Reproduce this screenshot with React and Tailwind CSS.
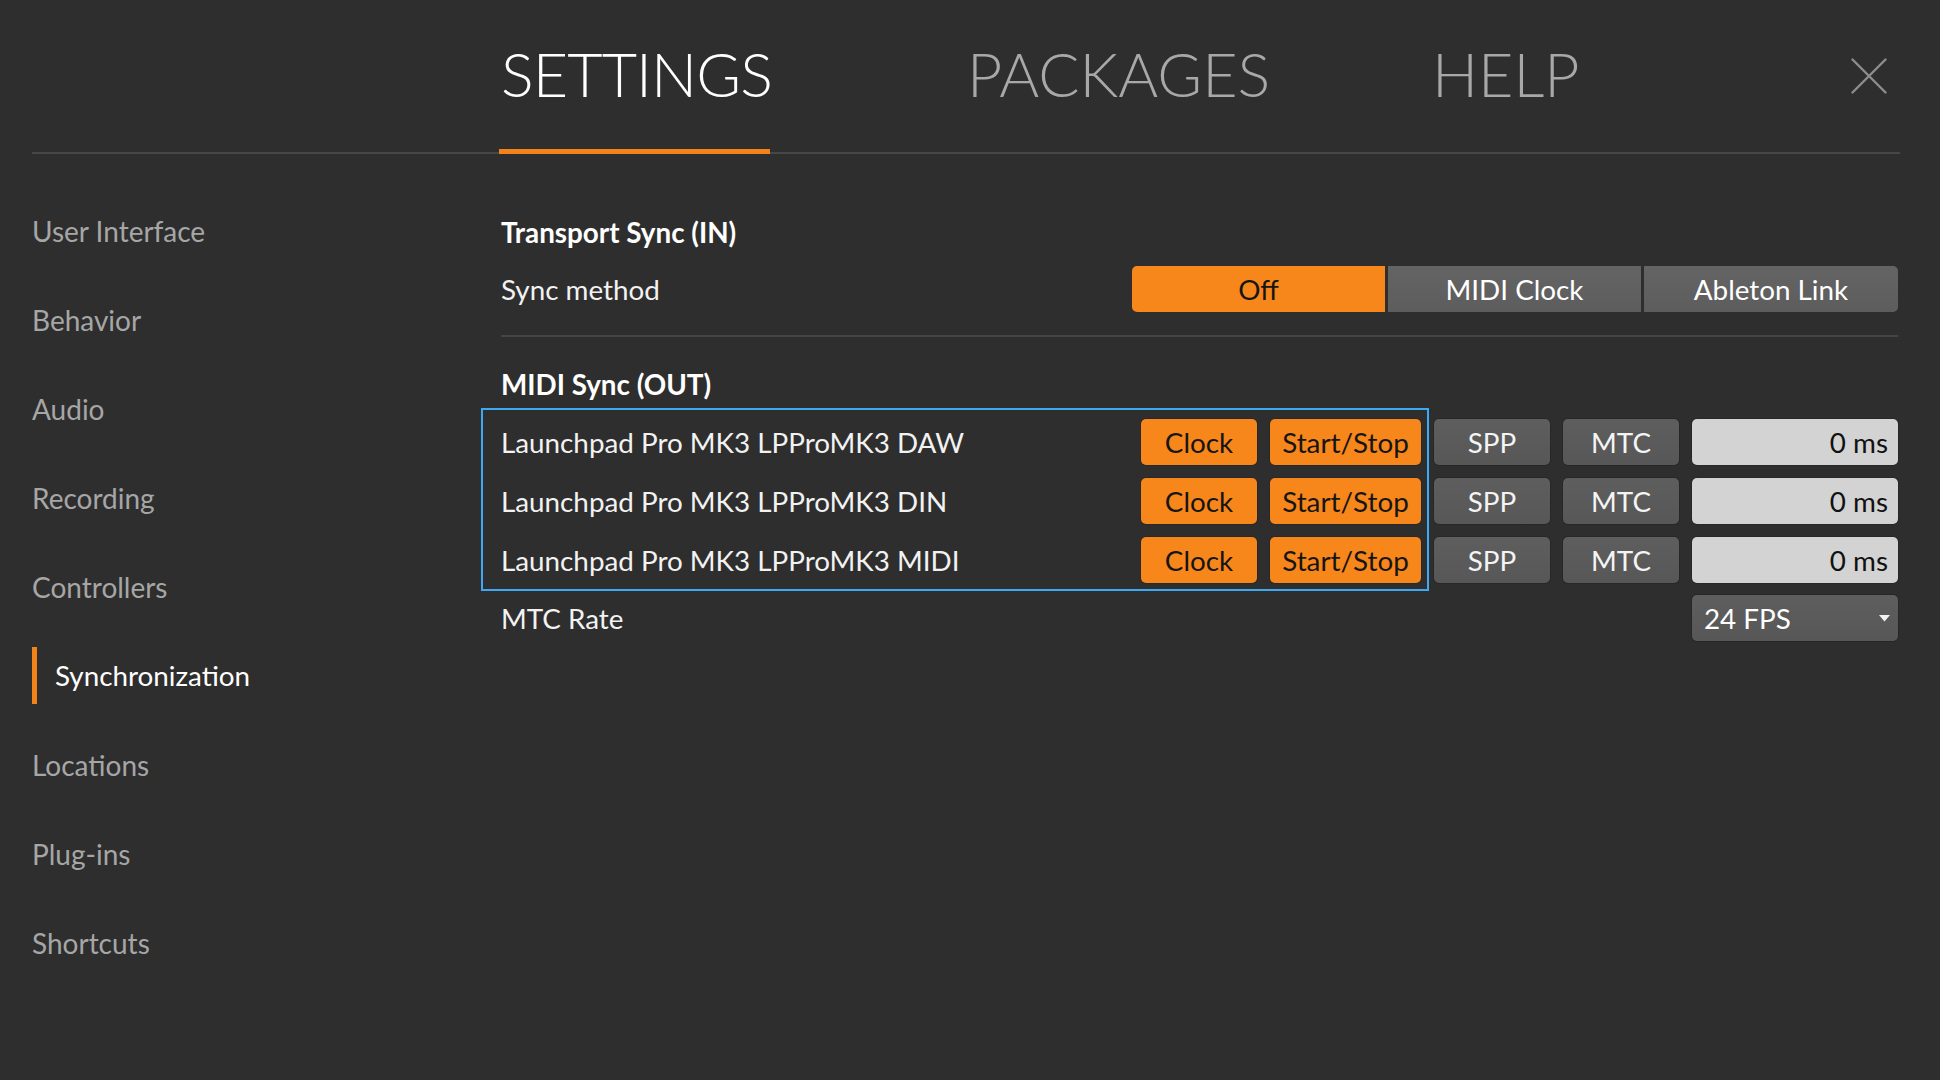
import React from "react";

const ORANGE_BTN =
  "bg-[#f7861b] text-[#151515] rounded-[5px] h-[46px] pt-[2px] flex items-center justify-center text-[27.8px] shadow-[0_0_0_1px_rgba(0,0,0,0.12)]";
const GREY_BTN =
  "bg-gradient-to-b from-[#5e5e5e] to-[#575757] text-[#f4f4f4] rounded-[5px] h-[46px] pt-[2px] w-[116px] flex items-center justify-center text-[27.8px] shadow-[0_0_0_1px_rgba(0,0,0,0.15)]";

const devices = [
  "Launchpad Pro MK3 LPProMK3 DAW",
  "Launchpad Pro MK3 LPProMK3 DIN",
  "Launchpad Pro MK3 LPProMK3 MIDI",
];

const sideItems = [
  "User Interface",
  "Behavior",
  "Audio",
  "Recording",
  "Controllers",
  "Synchronization",
  "Locations",
  "Plug-ins",
  "Shortcuts",
];

export default function App() {
  return (
    <div className="w-[1940px] h-[1080px] bg-[#2e2e2e] font-['Lato',sans-serif] overflow-hidden">
      <header className="ml-[32px] w-[1868px] h-[154px] border-b-2 border-[#474747] flex items-start">
        <div className="ml-[467px] w-[271px] h-[154px] shrink-0 border-b-[5px] border-[#f38319] pt-[43px] pl-[2px] text-[61px] leading-[61px] font-light tracking-[-0.9px] text-white whitespace-nowrap">
          SETTINGS
        </div>
        <div className="ml-[197px] w-[298px] shrink-0 pt-[43px] text-[61px] leading-[61px] font-light text-[#a8a8a8] whitespace-nowrap">
          PACKAGES
        </div>
        <div className="ml-[167px] w-[142px] shrink-0 pt-[43px] text-[61px] leading-[61px] font-light text-[#a8a8a8] whitespace-nowrap">
          HELP
        </div>
        <div className="ml-auto mr-[13px] mt-[58px]">
          <svg width="36" height="36" viewBox="0 0 36 36">
            <path d="M1.5 1.5 L34.5 34.5 M34.5 1.5 L1.5 34.5" stroke="#8d8d8d" strokeWidth="2.4" strokeLinecap="round" fill="none" />
          </svg>
        </div>
      </header>

      <div className="flex">
        <nav className="ml-[32px] w-[469px] shrink-0 pt-[32px] flex flex-col">
          {sideItems.map((item) =>
            item === "Synchronization" ? (
              <div key={item} className="h-[89px] flex items-center">
                <span className="w-[5px] h-[57px] bg-[#f38319]" />
                <span className="ml-[18px] text-[27.8px] text-white">{item}</span>
              </div>
            ) : (
              <div key={item} className="h-[89px] flex items-center text-[28px] text-[#a6a6a6]">
                {item}
              </div>
            )
          )}
        </nav>

        <main className="w-[1397px] shrink-0 pt-[63px] flex flex-col text-[#f2f2f2]">
          <h2 className="text-[27.8px] leading-[32px] font-bold text-white">Transport Sync (IN)</h2>

          <div className="mt-[17px] h-[46px] flex items-center justify-between">
            <span className="pt-[2px] text-[27.8px]">Sync method</span>
            <div className="w-[766px] h-[46px] flex gap-[3px] rounded-[5px] overflow-hidden text-[27.8px]">
              <div className="w-[253px] pt-[2px] bg-[#f7861b] text-[#151515] flex items-center justify-center">Off</div>
              <div className="w-[253px] pt-[2px] bg-gradient-to-b from-[#646464] to-[#5d5d5d] text-white flex items-center justify-center">MIDI Clock</div>
              <div className="w-[254px] pt-[2px] bg-gradient-to-b from-[#646464] to-[#5d5d5d] text-white flex items-center justify-center">Ableton Link</div>
            </div>
          </div>

          <div className="mt-[23px] h-[2px] bg-[#454545]" />

          <h2 className="mt-[32px] text-[27.8px] leading-[32px] font-bold text-white">MIDI Sync (OUT)</h2>

          <div className="mt-[7px] flex">
            <div className="ml-[-20px] w-[948px] shrink-0 border-2 border-[#3ea8f0] pt-[9px] pb-[6px] pl-[18px] pr-[6px] flex flex-col gap-[13px]">
              {devices.map((d) => (
                <div key={d} className="h-[46px] flex items-center">
                  <span className="flex-1 pt-[2px] text-[27.8px] whitespace-nowrap">{d}</span>
                  <div className={ORANGE_BTN + " w-[116px]"}>Clock</div>
                  <div className={ORANGE_BTN + " ml-[13px] w-[151px]"}>Start/Stop</div>
                </div>
              ))}
            </div>
            <div className="ml-[5px] pt-[11px] flex flex-col gap-[13px]">
              {devices.map((d) => (
                <div key={d} className="flex gap-[13px]">
                  <div className={GREY_BTN}>SPP</div>
                  <div className={GREY_BTN}>MTC</div>
                  <div className="w-[206px] h-[46px] pt-[2px] rounded-[5px] bg-[#d3d3d3] text-[#111111] text-[27.8px] flex items-center justify-end pr-[10px] shadow-[0_0_0_1px_rgba(0,0,0,0.12)]">
                    0 ms
                  </div>
                </div>
              ))}
            </div>
          </div>

          <div className="mt-[4px] h-[46px] flex items-center justify-between">
            <span className="pt-[2px] text-[27.8px]">MTC Rate</span>
            <div className="w-[206px] h-[46px] rounded-[5px] bg-gradient-to-b from-[#5e5e5e] to-[#575757] text-white text-[27.8px] flex items-center justify-between pl-[12px] pr-[8px] shadow-[0_0_0_1px_rgba(0,0,0,0.15)]">
              <span className="pt-[2px]">24 FPS</span>
              <svg width="11" height="7" viewBox="0 0 11 7">
                <path d="M0 0 L11 0 L5.5 6.5 Z" fill="#f2f2f2" />
              </svg>
            </div>
          </div>
        </main>
      </div>
    </div>
  );
}
